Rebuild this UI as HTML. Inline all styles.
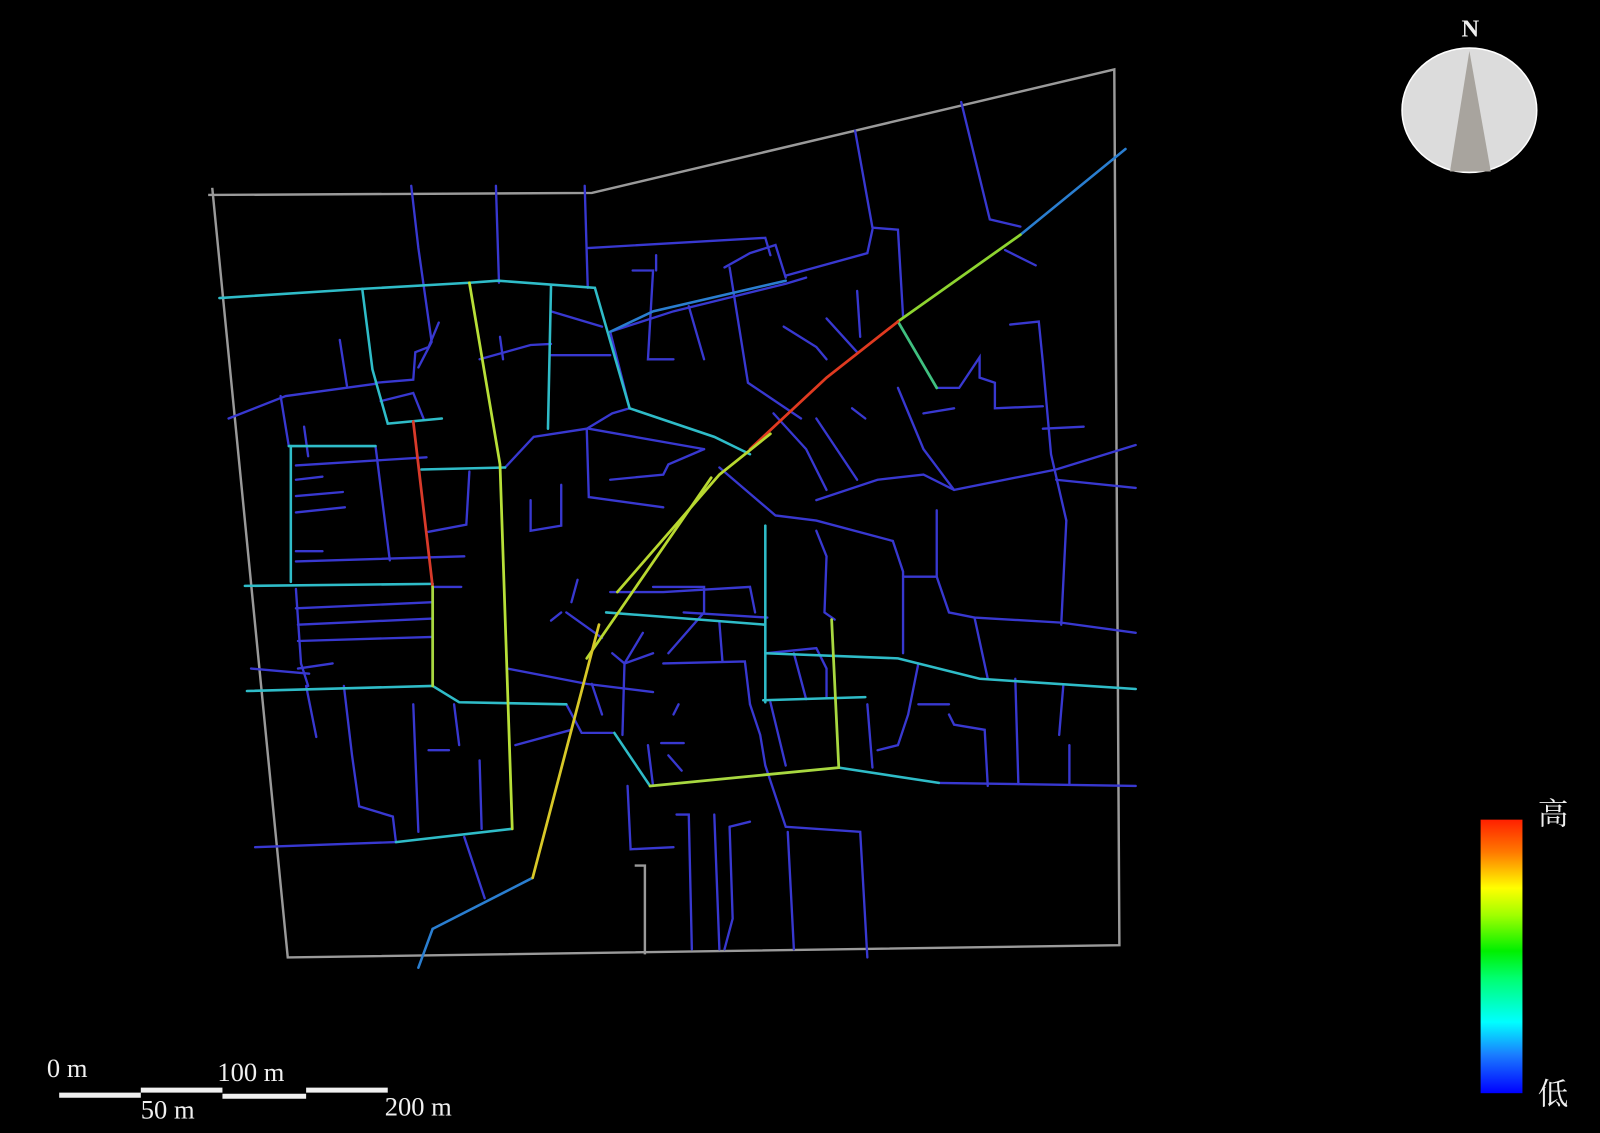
<!DOCTYPE html>
<html><head><meta charset="utf-8"><style>
html,body{margin:0;padding:0;background:#000;width:1600px;height:1133px;overflow:hidden}
svg{display:block}
</style></head><body>
<svg width="1600" height="1133" viewBox="0 0 1568 1110" preserveAspectRatio="none" xmlns="http://www.w3.org/2000/svg">
<defs>
<linearGradient id="lg" x1="0" y1="0" x2="0" y2="1">
<stop offset="0" stop-color="#ff2000"/><stop offset="0.12" stop-color="#ff7a00"/><stop offset="0.25" stop-color="#ffff00"/><stop offset="0.35" stop-color="#a0ff00"/><stop offset="0.48" stop-color="#00f000"/><stop offset="0.58" stop-color="#00ff70"/><stop offset="0.74" stop-color="#00ffff"/><stop offset="0.86" stop-color="#1a7cff"/><stop offset="1" stop-color="#0000ff"/>
</linearGradient>
</defs>
<rect width="1568" height="1110" fill="#000"/>
<g stroke="#9a9a9a" stroke-width="2.4" fill="none">
<polyline points="204,191 580,189 1092,68 1097,926 282,938 208,184"/>
<polyline points="622,848 632,848 632,935"/>
</g>
<g stroke="#3838d0" stroke-width="2.3" fill="none" stroke-linecap="round">
<polyline points="403,182 410,243 423,335 410,360"/>
<polyline points="486,182 489,277"/>
<polyline points="573,182 576,282"/>
<polyline points="224,410 280,388 368,376"/>
<polyline points="275,388 283,437"/>
<polyline points="333,333 340,378"/>
<polyline points="430,316 420,340 407,345 405,372 368,375"/>
<polyline points="373,393 405,385 415,410"/>
<polyline points="298,418 302,447"/>
<polyline points="368,437 382,549"/>
<polyline points="290,456 418,448"/>
<polyline points="290,470 316,467"/>
<polyline points="290,486 336,482"/>
<polyline points="290,502 338,497"/>
<polyline points="290,540 316,540"/>
<polyline points="290,550 455,545"/>
<polyline points="290,577 295,650 302,672"/>
<polyline points="290,596 424,590"/>
<polyline points="292,612 424,606"/>
<polyline points="292,628 424,624"/>
<polyline points="292,655 326,650"/>
<polyline points="246,655 303,660"/>
<polyline points="424,575 452,575"/>
<polyline points="420,521 457,514 460,462"/>
<polyline points="495,458 523,428 575,420 600,405 617,400"/>
<polyline points="470,352 520,338 540,337"/>
<polyline points="490,330 493,352"/>
<polyline points="540,305 590,320"/>
<polyline points="540,348 598,348"/>
<polyline points="575,420 577,487 650,497"/>
<polyline points="598,470 650,465 655,455 690,440"/>
<polyline points="577,420 690,440"/>
<polyline points="520,490 520,520 550,515 550,475"/>
<polyline points="576,243 750,233 755,250"/>
<polyline points="617,400 598,325 660,305 770,278 790,272"/>
<polyline points="620,265 640,265 635,352 660,352"/>
<polyline points="643,250 643,265"/>
<polyline points="675,300 690,352"/>
<polyline points="710,262 735,248 760,240 770,272"/>
<polyline points="715,262 733,375 785,410"/>
<polyline points="838,128 855,223 880,225 885,310"/>
<polyline points="770,270 850,248 855,225"/>
<polyline points="840,285 843,330"/>
<polyline points="810,312 840,345"/>
<polyline points="768,320 800,340 810,352"/>
<polyline points="942,100 970,215 1000,222"/>
<polyline points="985,245 1015,260"/>
<polyline points="990,318 1018,315 1022,355 1030,445 1045,510"/>
<polyline points="918,380 940,380 960,350 960,370 975,375 975,400 1022,398"/>
<polyline points="880,380 905,440 935,480"/>
<polyline points="905,405 935,400"/>
<polyline points="1022,420 1062,418"/>
<polyline points="800,490 860,470 905,465 935,480 1035,460 1113,436"/>
<polyline points="1035,470 1113,478"/>
<polyline points="820,440 840,470"/>
<polyline points="800,410 820,440"/>
<polyline points="835,400 848,410"/>
<polyline points="758,405 790,440 810,480"/>
<polyline points="705,458 760,505 800,510 875,530"/>
<polyline points="800,520 810,545 808,600 818,607"/>
<polyline points="875,530 885,560 885,640"/>
<polyline points="885,565 918,565 918,500"/>
<polyline points="918,565 930,600 955,605 1040,610 1113,620"/>
<polyline points="955,605 968,665"/>
<polyline points="1045,510 1040,612"/>
<polyline points="900,650 890,700 880,730 860,735"/>
<polyline points="930,700 935,710 965,715 968,770"/>
<polyline points="995,665 998,768"/>
<polyline points="1042,672 1038,720"/>
<polyline points="1048,730 1048,768"/>
<polyline points="920,767 1113,770"/>
<polyline points="900,690 930,690"/>
<polyline points="750,640 800,635 810,655 810,683"/>
<polyline points="778,640 790,685"/>
<polyline points="755,688 770,750"/>
<polyline points="850,690 855,752"/>
<polyline points="735,690 745,720 750,750 770,810 843,815 850,938"/>
<polyline points="772,815 778,930"/>
<polyline points="715,810 735,805"/>
<polyline points="715,810 718,900 710,930"/>
<polyline points="663,798 675,798 678,930"/>
<polyline points="700,798 705,930"/>
<polyline points="615,770 618,832 660,830"/>
<polyline points="660,700 665,690"/>
<polyline points="635,730 640,770"/>
<polyline points="648,728 670,728"/>
<polyline points="655,740 668,755"/>
<polyline points="610,720 612,650 600,640"/>
<polyline points="630,620 612,650"/>
<polyline points="650,650 730,648 735,690"/>
<polyline points="655,640 690,600 690,575 640,575"/>
<polyline points="598,580 650,580 735,575 740,600"/>
<polyline points="705,610 708,648"/>
<polyline points="566,568 560,590"/>
<polyline points="555,600 590,625"/>
<polyline points="540,608 550,600"/>
<polyline points="555,690 570,718 600,718"/>
<polyline points="560,715 505,730"/>
<polyline points="497,655 575,670 640,678"/>
<polyline points="580,670 590,700"/>
<polyline points="612,650 640,640"/>
<polyline points="445,690 450,730"/>
<polyline points="405,690 410,815"/>
<polyline points="337,672 345,740 352,790 385,800 388,825"/>
<polyline points="300,672 310,722"/>
<polyline points="470,745 472,812"/>
<polyline points="455,820 475,880"/>
<polyline points="250,830 388,825"/>
<polyline points="420,735 440,735"/>
<polyline points="670,600 752,605"/>
</g>
<g stroke="#2fbcc8" stroke-width="2.5" fill="none" stroke-linecap="round">
<polyline points="215,292 355,283 460,277 488,275 583,282 617,400"/>
<polyline points="355,283 365,362 380,415 433,410"/>
<polyline points="283,437 368,437"/>
<polyline points="285,437 285,570"/>
<polyline points="413,460 495,458"/>
<polyline points="617,400 700,428 735,445"/>
<polyline points="242,677 424,672"/>
<polyline points="240,574 424,572"/>
<polyline points="602,718 637,770"/>
<polyline points="750,515 750,688"/>
<polyline points="748,686 848,683"/>
<polyline points="822,752 920,767"/>
<polyline points="388,825 502,812"/>
<polyline points="594,600 750,612"/>
<polyline points="750,640 880,645 960,665 1113,675"/>
<polyline points="424,672 450,688 555,690"/>
<polyline points="540,280 537,420"/>
</g>
<g stroke="#2a7ed0" stroke-width="2.5" fill="none" stroke-linecap="round">
<polyline points="1103,146 1000,230"/>
<polyline points="522,860 424,910"/>
<polyline points="424,910 410,948"/>
<polyline points="598,325 640,305 770,275"/>
</g>
<g fill="none" stroke-linecap="round" stroke-width="2.7">
<polyline points="1000,230 880,315" stroke="#8ed430"/>
<polyline points="880,315 918,380" stroke="#40c080"/>
<polyline points="880,315 810,370 735,440" stroke="#e03a20"/>
<polyline points="755,425 705,465 605,580" stroke="#b8d830"/>
<polyline points="697,468 575,645" stroke="#b8d830"/>
<polyline points="587,612 522,860" stroke="#d8c828"/>
<polyline points="460,277 490,455 502,812" stroke="#b8e038"/>
<polyline points="405,413 424,575" stroke="#d83a2a"/>
<polyline points="424,575 424,672" stroke="#a8d840"/>
<polyline points="637,770 822,752" stroke="#a8d840"/>
<polyline points="815,607 822,752" stroke="#a8d840"/>
</g>
<ellipse cx="1440" cy="108" rx="66" ry="61" fill="#dcdcdc" stroke="#fff" stroke-width="1.5"/>
<polygon points="1440,50 1421,168 1461,168" fill="#a8a49e"/>
<text x="1441" y="36" fill="#eee" font-family="Liberation Serif, serif" font-size="24" font-weight="bold" text-anchor="middle">N</text>
<rect x="1451" y="803" width="41" height="268" fill="url(#lg)"/>
<text x="1507" y="808" fill="#eee" font-family="Liberation Serif, 'Noto Serif CJK SC', serif" font-size="30">高</text>
<text x="1507" y="1082" fill="#eee" font-family="Liberation Serif, 'Noto Serif CJK SC', serif" font-size="30">低</text>
<g stroke="#f0f0f0" stroke-width="5" fill="none">
<line x1="58" y1="1073" x2="138" y2="1073"/>
<line x1="138" y1="1068" x2="218" y2="1068"/>
<line x1="218" y1="1074" x2="300" y2="1074"/>
<line x1="300" y1="1068" x2="380" y2="1068"/>
</g>
<g fill="#f0f0f0" font-family="Liberation Serif, serif" font-size="26">
<text x="46" y="1055">0 m</text>
<text x="213" y="1059">100 m</text>
<text x="138" y="1096">50 m</text>
<text x="377" y="1093">200 m</text>
</g>
</svg>
</body></html>
